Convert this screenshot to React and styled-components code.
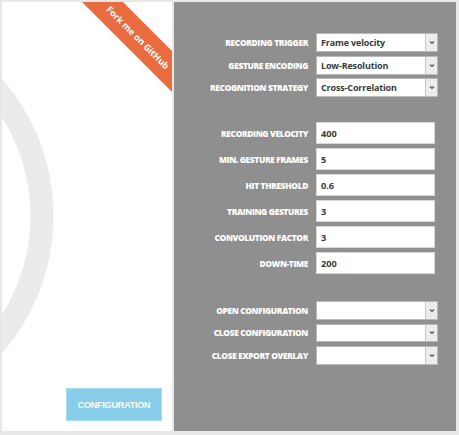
import React from "react";
import styled, { createGlobalStyle } from "styled-components";

const Global = createGlobalStyle`
  html, body { margin: 0; padding: 0; background: #e8e8e8; }
  body { font-family: "Open Sans", "Liberation Sans", sans-serif; }
`;

const Frame = styled.div`
  width: 459px;
  height: 435px;
  box-sizing: border-box;
  padding: 2px 3px 4px 2px;
  background: #e8e8e8;
  display: grid;
  grid-template-columns: 170px 1fr;
  column-gap: 2px;
`;

const LeftPanel = styled.div`
  position: relative;
  overflow: hidden;
  background: #ffffff;
  display: flex;
  flex-direction: column;
  justify-content: flex-end;
  align-items: flex-end;
  padding: 0 10px 10px 0;
`;

const Arc = styled.svg`
  position: absolute;
  left: 0;
  top: 0;
`;

const Ribbon = styled.a`
  position: absolute;
  left: 36px;
  top: 21px;
  width: 200px;
  height: 29px;
  transform: rotate(45deg);
  background: #ea6b3e;
  color: #ffffff;
  font-family: "Open Sans", "Liberation Sans", sans-serif;
  font-weight: 700;
  font-size: 9px;
  text-decoration: none;
  display: flex;
  align-items: center;
  justify-content: center;
`;

const ConfigButton = styled.button`
  position: relative;
  width: 96px;
  height: 33px;
  box-sizing: border-box;
  border: 1px solid #a6dcf2;
  background: #88cdea;
  color: #ffffff;
  font-family: "Liberation Sans", Arial, sans-serif;
  font-weight: 700;
  font-size: 9px;
  letter-spacing: -0.2px;
  padding: 0;
  cursor: pointer;
`;

const RightPanel = styled.div`
  background: #8f8f8f;
  padding-top: 31px;
  display: flex;
  flex-direction: column;
`;

const Section = styled.div`
  display: grid;
  grid-template-columns: 134px 122px;
  column-gap: 8px;
  row-gap: ${(p) => p.$gap}px;
  margin-top: ${(p) => p.$top}px;
  grid-auto-rows: ${(p) => p.$row}px;
  align-items: center;
`;

const Label = styled.label`
  text-align: right;
  color: #ffffff;
  font-family: "Open Sans", "Liberation Sans", sans-serif;
  font-weight: 800;
  font-size: 8.4px;
  letter-spacing: -0.35px;
  white-space: nowrap;
`;

const SelectBox = styled.div`
  height: 100%;
  box-sizing: border-box;
  background: #ffffff;
  border: 1px solid #b9b9b9;
  display: flex;
  align-items: stretch;
`;

const SelectValue = styled.div`
  flex: 1;
  display: flex;
  align-items: center;
  padding-left: 4px;
  color: #3a3a3a;
  font-family: "Open Sans", "Liberation Sans", sans-serif;
  font-weight: 700;
  font-size: 9px;
  letter-spacing: -0.15px;
`;

const ArrowBox = styled.div`
  width: 11px;
  background: #ececec;
  border-left: 1px solid #c8c8c8;
  display: flex;
  align-items: center;
  justify-content: center;
`;

const TextInput = styled.input`
  width: 119px;
  height: 100%;
  box-sizing: border-box;
  border: 1px solid #d8d8d8;
  background: #ffffff;
  padding: 0 0 0 4px;
  margin: 0;
  color: #3a3a3a;
  font-family: "Open Sans", "Liberation Sans", sans-serif;
  font-weight: 700;
  font-size: 9.2px;
  outline: none;
`;

const Chevron = () => (
  <svg width="6" height="5" viewBox="0 0 6 5">
    <path d="M1 1.5 L3 3.5 L5 1.5" fill="none" stroke="#555" strokeWidth="1.2" />
  </svg>
);

const Select = ({ value }) => (
  <SelectBox>
    <SelectValue>{value}</SelectValue>
    <ArrowBox>
      <Chevron />
    </ArrowBox>
  </SelectBox>
);

const topSelects = [
  ["RECORDING TRIGGER", "Frame velocity"],
  ["GESTURE ENCODING", "Low-Resolution"],
  ["RECOGNITION STRATEGY", "Cross-Correlation"],
];

const inputs = [
  ["RECORDING VELOCITY", "400"],
  ["MIN. GESTURE FRAMES", "5"],
  ["HIT THRESHOLD", "0.6"],
  ["TRAINING GESTURES", "3"],
  ["CONVOLUTION FACTOR", "3"],
  ["DOWN-TIME", "200"],
];

const bottomSelects = ["OPEN CONFIGURATION", "CLOSE CONFIGURATION", "CLOSE EXPORT OVERLAY"];

export default function App() {
  return (
    <>
      <Global />
      <Frame>
        <LeftPanel>
          <Arc width="170" height="429" viewBox="0 0 170 429">
            <circle cx="-157" cy="214" r="197" fill="none" stroke="#ebebeb" strokeWidth="23" />
          </Arc>
          <Ribbon href="#">Fork me on GitHub</Ribbon>
          <ConfigButton>CONFIGURATION</ConfigButton>
        </LeftPanel>
        <RightPanel>
          <Section $gap={3.5} $top={0} $row={19}>
            {topSelects.map(([l, v]) => (
              <React.Fragment key={l}>
                <Label>{l}</Label>
                <Select value={v} />
              </React.Fragment>
            ))}
          </Section>
          <Section $gap={4} $top={25} $row={22}>
            {inputs.map(([l, v]) => (
              <React.Fragment key={l}>
                <Label>{l}</Label>
                <TextInput defaultValue={v} />
              </React.Fragment>
            ))}
          </Section>
          <Section $gap={4} $top={27} $row={18.5}>
            {bottomSelects.map((l) => (
              <React.Fragment key={l}>
                <Label>{l}</Label>
                <Select value="" />
              </React.Fragment>
            ))}
          </Section>
        </RightPanel>
      </Frame>
    </>
  );
}
